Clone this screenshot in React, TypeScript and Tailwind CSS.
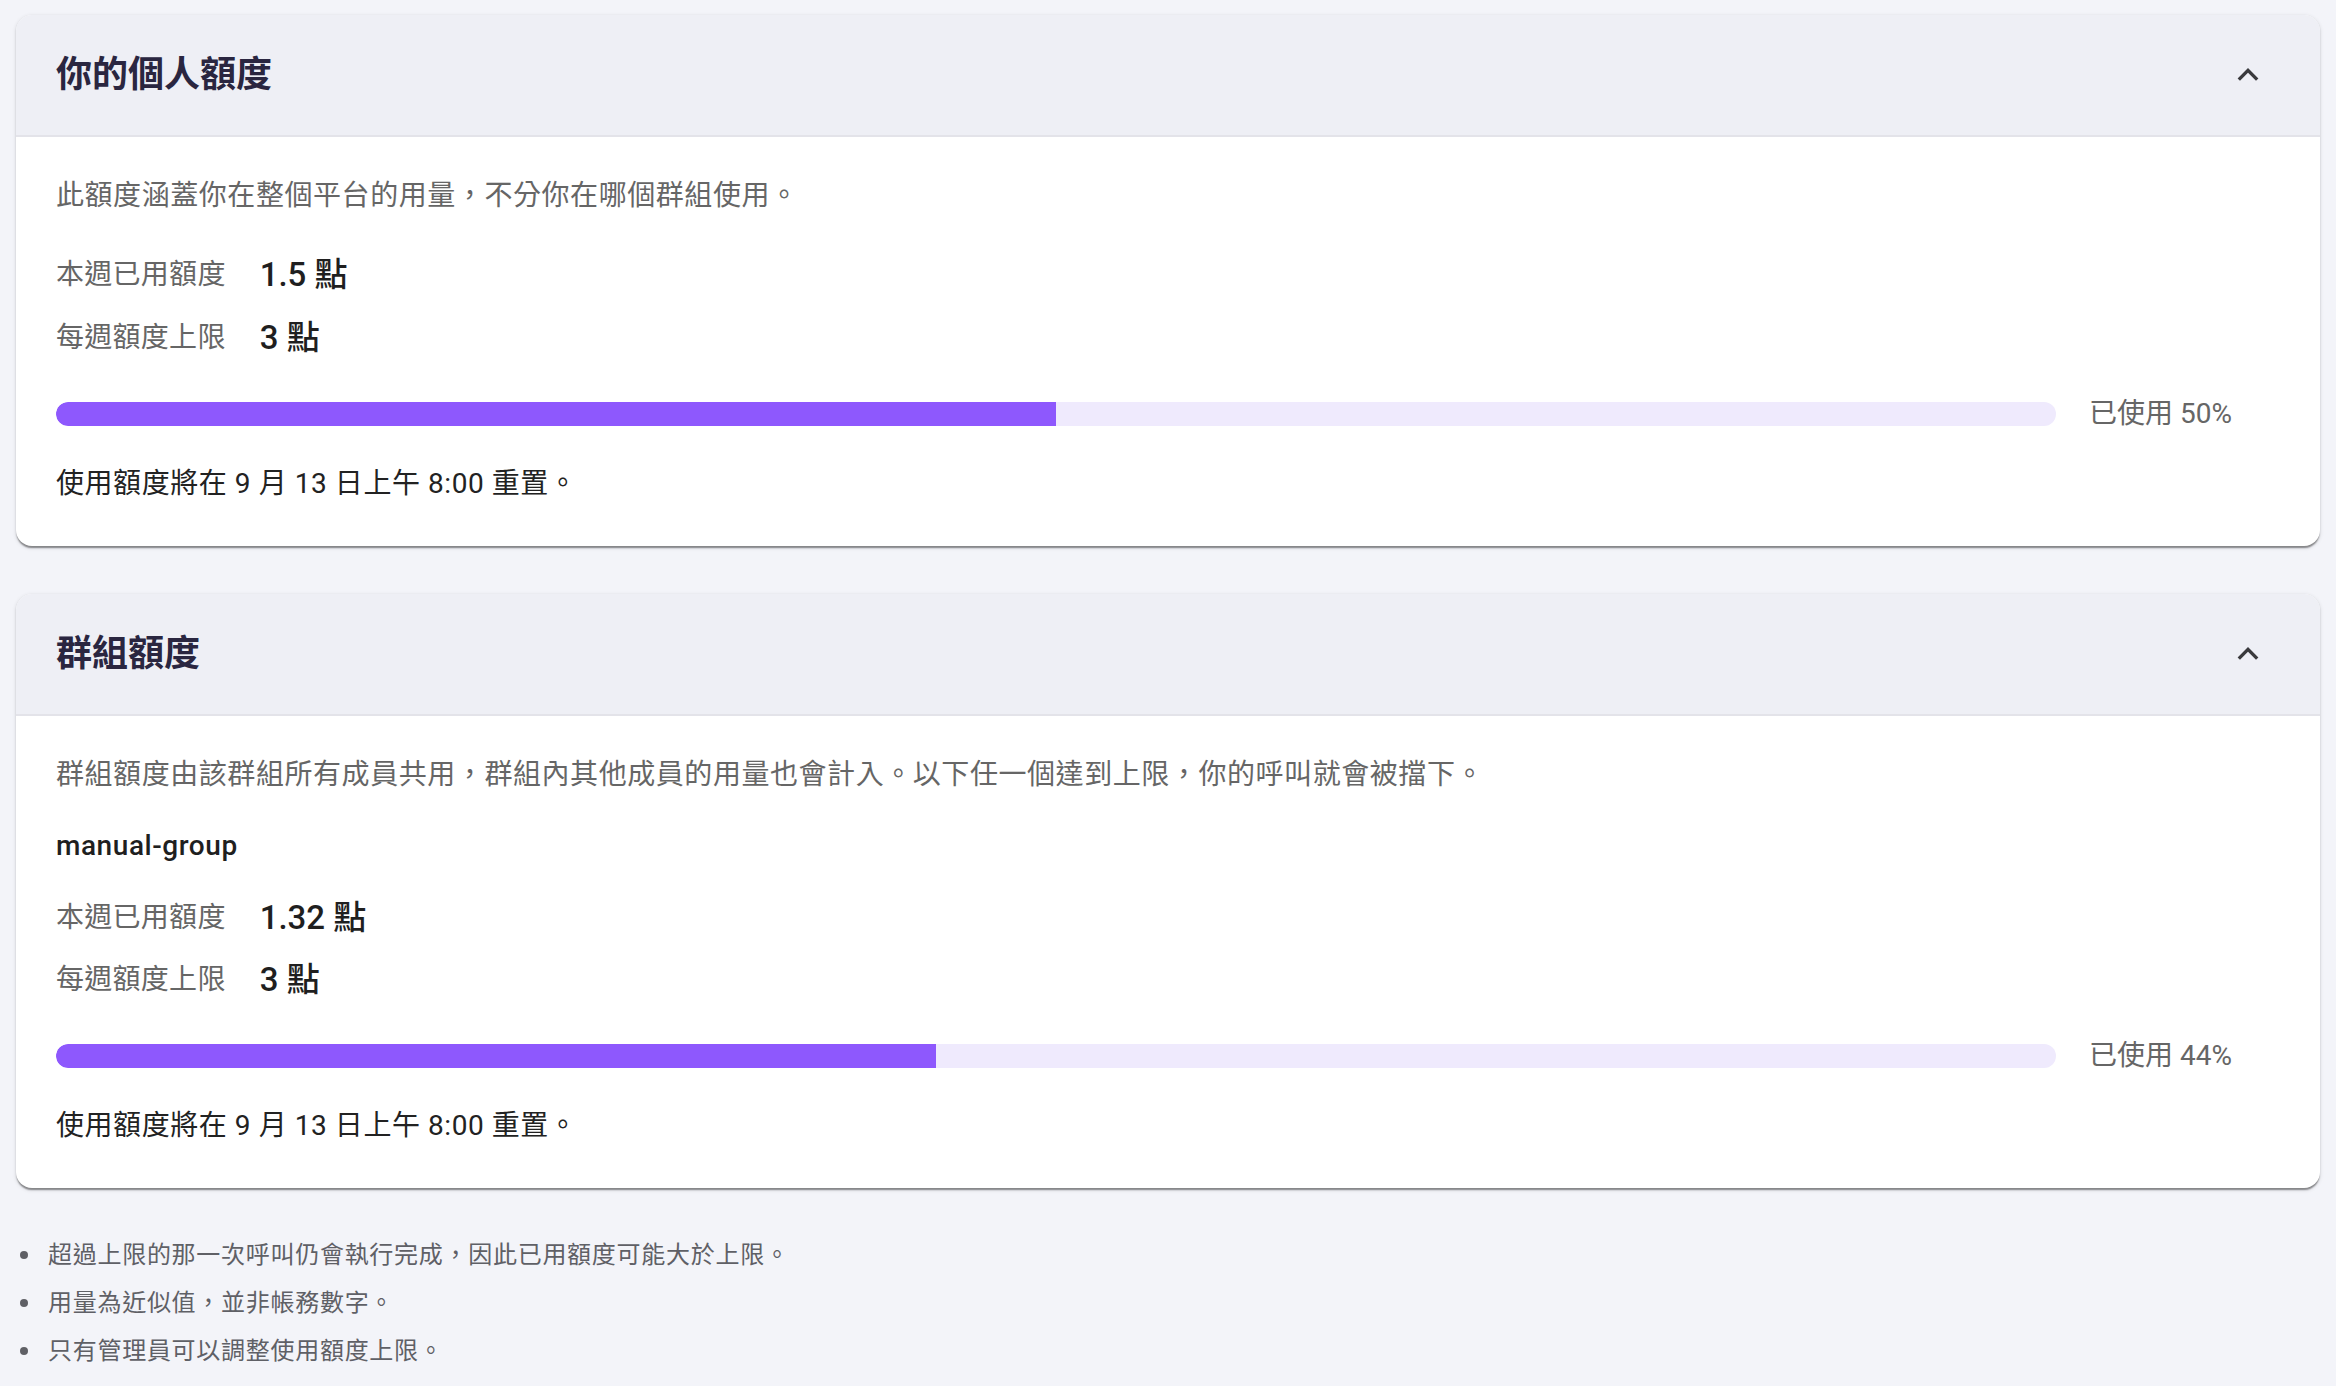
import React from "react";

const FONT = { fontFamily: 'Roboto, "Noto Sans CJK TC", "Noto Sans", sans-serif' };

function Chevron() {
  return (
    <svg width="36" height="36" viewBox="0 0 36 36" className="shrink-0" aria-hidden>
      <polyline points="8.8,22.6 18,13.4 27.2,22.6" fill="none" stroke="#3a3a3d" strokeWidth="3.4" strokeLinecap="butt" strokeLinejoin="miter" />
    </svg>
  );
}

function Header({ title }: { title: string }) {
  return (
    <div className="flex h-[122px] items-center justify-between rounded-t-[16px] border-b-2 border-[#e3e3e9] bg-[#eeeff5] pl-[40px] pr-[54px]">
      <div className="text-[36px] font-semibold leading-none text-[#2a2640]">{title}</div>
      <Chevron />
    </div>
  );
}

function Row({ label, value, className }: { label: string; value: string; className: string }) {
  return (
    <div className={`flex h-[42px] items-center gap-[34px] ${className}`}>
      <span className="text-[28px] leading-[42px] tracking-[0.01em] text-[#666666]">{label}</span>
      <span className="text-[33px] font-medium leading-[42px] text-[#1f1f1f]">{value}</span>
    </div>
  );
}

function Bar({ pct }: { pct: number }) {
  return (
    <div className="mt-[43px] flex h-[24px] items-center gap-[33px]">
      <div className="h-[24px] flex-1 overflow-hidden rounded-full bg-[#efeafd]">
        <div className="h-full rounded-l-full bg-[#8e58fd]" style={{ width: `${pct}%` }} />
      </div>
      <div className="w-[191px] text-[28px] leading-[42px] text-[#666666]">已使用 {pct}%</div>
    </div>
  );
}

function Card({ children, title }: { children: React.ReactNode; title: string }) {
  return (
    <div className="rounded-[16px] bg-white shadow-[0_3px_1.5px_-1.5px_rgba(0,0,0,0.28),0_1.5px_1.5px_0_rgba(0,0,0,0.16),0_1.5px_4.5px_0_rgba(0,0,0,0.12)]">
      <Header title={title} />
      <div className="px-[40px] pb-[41px] pt-[38px]">{children}</div>
    </div>
  );
}

export default function App() {
  return (
    <div className="min-h-screen bg-[#f3f4f9] px-[16px] pt-[15px] pb-[10px]" style={FONT}>
      <Card title="你的個人額度">
        <div className="text-[28px] leading-[42px] tracking-[0.02em] text-[#666666]">此額度涵蓋你在整個平台的用量，不分你在哪個群組使用。</div>
        <Row label="本週已用額度" value="1.5 點" className="mt-[37px]" />
        <Row label="每週額度上限" value="3 點" className="mt-[21px]" />
        <Bar pct={50} />
        <div className="mt-[37px] text-[28px] leading-[42px] tracking-[0.02em] text-[#222222]">使用額度將在 9 月 13 日上午 8:00 重置。</div>
      </Card>

      <div className="mt-[48px]">
        <Card title="群組額度">
          <div className="text-[28px] leading-[42px] tracking-[0.02em] text-[#666666]">
            群組額度由該群組所有成員共用，群組內其他成員的用量也會計入。以下任一個達到上限，你的呼叫就會被擋下。
          </div>
          <div className="mt-[29px] text-[28px] font-medium leading-[42px] tracking-[0.02em] text-[#1f1f1f]">manual-group</div>
          <Row label="本週已用額度" value="1.32 點" className="mt-[30px]" />
          <Row label="每週額度上限" value="3 點" className="mt-[20px]" />
          <Bar pct={44} />
          <div className="mt-[37px] text-[28px] leading-[42px] tracking-[0.02em] text-[#222222]">使用額度將在 9 月 13 日上午 8:00 重置。</div>
        </Card>
      </div>

      <ul className="mt-[43px] flex flex-col">
        {[
          "超過上限的那一次呼叫仍會執行完成，因此已用額度可能大於上限。",
          "用量為近似值，並非帳務數字。",
          "只有管理員可以調整使用額度上限。",
        ].map((t) => (
          <li key={t} className="flex items-center gap-[20px] pl-[4px] text-[24px] leading-[48px] tracking-[0.03em] text-[#5f6066]">
            <span className="h-[8px] w-[8px] shrink-0 rounded-full bg-[#5f6066]" />
            <span>{t}</span>
          </li>
        ))}
      </ul>
    </div>
  );
}
